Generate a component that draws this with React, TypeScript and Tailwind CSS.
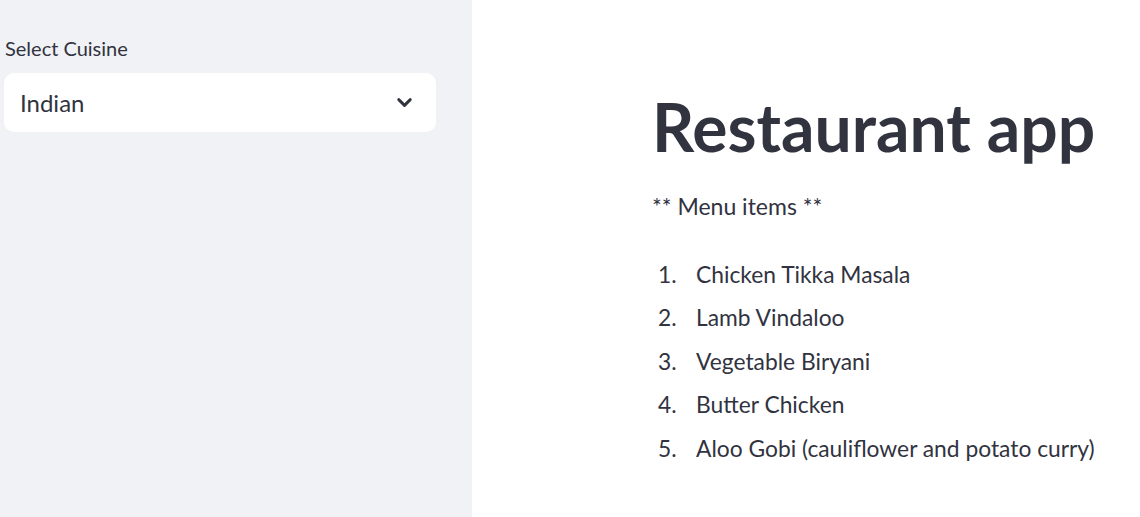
import { ChevronDown } from 'lucide-react'

const menuItems = [
    'Chicken Tikka Masala',
    'Lamb Vindaloo',
    'Vegetable Biryani',
    'Butter Chicken',
    'Aloo Gobi (cauliflower and potato curry)',
]

function Sidebar() {
    return (
        <aside className="w-[472px] shrink-0 bg-[#f0f2f6] h-[517px] pt-[34px] pl-[4px] pr-[36px]">
            <label className="block pl-[1px] text-[20px] leading-[28px] text-[#31333f]">Select Cuisine</label>
            <div className="mt-[11px] h-[59px] bg-white rounded-[10px] flex items-center justify-between pl-[16px] pr-[20px]">
                <span className="text-[24px] text-[#31333f]">Indian</span>
                <ChevronDown className="w-[23px] h-[23px] text-[#31333f]" strokeWidth={3} />
            </div>
        </aside>
    )
}

export default function App() {
    return (
        <div className="flex w-[1140px] h-[517px] overflow-hidden bg-white font-['Lato','Liberation_Sans',sans-serif] text-[#31333f]">
            <Sidebar />
            <main className="pl-[180px] pt-[87px] whitespace-nowrap">
                <h1 className="text-[66px] leading-[80px] font-bold text-[#31333f]">Restaurant app</h1>
                <p className="mt-[23px] text-[23px] leading-[32px]">** Menu items **</p>
                <ol className="mt-[30px]">
                    {menuItems.map((item, i) => (
                        <li key={item} className="flex h-[43.5px] items-center text-[22.8px]">
                            <span className="w-[44px] pl-[6px]">{i + 1}.</span>
                            <span>{item}</span>
                        </li>
                    ))}
                </ol>
            </main>
        </div>
    )
}
